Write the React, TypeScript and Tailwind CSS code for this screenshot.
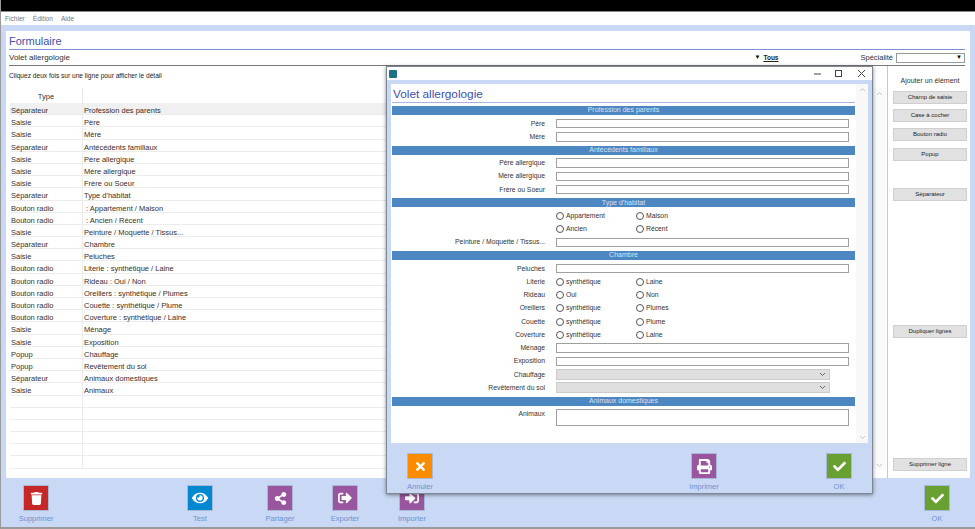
import type { ReactNode } from "react";
import { FaTrash, FaEye, FaShareAlt, FaSignOutAlt, FaSignInAlt, FaPrint, FaTimes, FaCheck } from "react-icons/fa";

const rows = [
  ["Séparateur", "Profession des parents"],
  ["Saisie", "Père"],
  ["Saisie", "Mère"],
  ["Séparateur", "Antécédents familiaux"],
  ["Saisie", "Père allergique"],
  ["Saisie", "Mère allergique"],
  ["Saisie", "Frère ou Soeur"],
  ["Séparateur", "Type d'habitat"],
  ["Bouton radio", "\u00a0: Appartement / Maison"],
  ["Bouton radio", "\u00a0: Ancien / Récent"],
  ["Saisie", "Peinture / Moquette / Tissus..."],
  ["Séparateur", "Chambre"],
  ["Saisie", "Peluches"],
  ["Bouton radio", "Literie : synthétique / Laine"],
  ["Bouton radio", "Rideau : Oui / Non"],
  ["Bouton radio", "Oreillers : synthétique / Plumes"],
  ["Bouton radio", "Couette : synthétique / Plume"],
  ["Bouton radio", "Coverture : synthétique / Laine"],
  ["Saisie", "Ménage"],
  ["Saisie", "Exposition"],
  ["Popup", "Chauffage"],
  ["Popup", "Revêtement du sol"],
  ["Séparateur", "Animaux domestiques"],
  ["Saisie", "Animaux"],
  ["", ""],
  ["", ""],
  ["", ""],
  ["", ""],
  ["", ""],
  ["", ""],
];

function ActionButton({ color, icon, label, className }: { color: string; icon: ReactNode; label: string; className: string }) {
  return (
    <div className={`flex flex-col items-center ${className}`}>
      <div className={`w-[26px] h-[26px] flex items-center justify-center text-white border border-[#aab8d8] ${color}`}>{icon}</div>
      <span className="mt-[3px] text-[7.5px] leading-[10px] text-[#6d92cf] whitespace-nowrap">{label}</span>
    </div>
  );
}

function SideButton({ label, className = "" }: { label: string; className?: string }) {
  return (
    <div className={`h-[13px] w-[74px] flex items-center justify-center bg-[#e1e1e1] border border-[#cfcfcf] text-[6px] text-[#222] ${className}`}>
      {label}
    </div>
  );
}

function Bar({ label }: { label: string }) {
  return <div className="h-[9px] w-[463px] ml-[1px] bg-[#4d87c2] flex items-center justify-center text-[7px] text-[#d4e2f4]">{label}</div>;
}

function Row({ label, children }: { label?: string; children: ReactNode }) {
  return (
    <div className="h-[13.25px] flex items-center">
      <div className="w-[154px] shrink-0 text-right text-[6.8px] text-[#333] whitespace-nowrap">{label}</div>
      <div className="ml-[11px] flex items-center">{children}</div>
    </div>
  );
}

function Field() {
  return <div className="w-[293px] h-[9.5px] bg-white border border-[#a0a0a0]" />;
}

function Radios({ a, b }: { a: string; b: string }) {
  return (
    <>
      <div className="w-[80px] flex items-center gap-[2px]">
        <span className="w-[8px] h-[8px] rounded-full border border-[#555] bg-white" />
        <span className="text-[6.8px] text-[#333]">{a}</span>
      </div>
      <div className="flex items-center gap-[2px]">
        <span className="w-[8px] h-[8px] rounded-full border border-[#555] bg-white" />
        <span className="text-[6.8px] text-[#333]">{b}</span>
      </div>
    </>
  );
}

function Popup() {
  return (
    <div className="w-[274px] h-[11px] bg-[#dfdfdf] border border-[#cccccc] flex items-center justify-end pr-[3px]">
      <svg width="7" height="5" viewBox="0 0 7 5" fill="none" stroke="#666" strokeWidth="1"><path d="M1 1l2.5 2.5L6 1" /></svg>
    </div>
  );
}

function Chevron({ up, className = "" }: { up?: boolean; className?: string }) {
  return (
    <svg width="7" height="5" viewBox="0 0 7 5" fill="none" stroke="#c4c4c4" strokeWidth="1" className={className}>
      <path d={up ? "M1 4l2.5-2.5L6 4" : "M1 1l2.5 2.5L6 1"} />
    </svg>
  );
}

function Modal() {
  return (
    <div className="absolute left-[385px] top-[66px] w-[487px] h-[428px] bg-[#c9d8f4] border border-[#7d8794] shadow-[0_1px_4px_rgba(0,0,0,0.45)] flex flex-col">
      <div className="h-[13px] bg-white flex items-center pl-[2px]">
        <div className="w-[8px] h-[8px] bg-[#1f6f85] rounded-[1px]" />
        <svg width="7" height="2" viewBox="0 0 7 2" className="ml-[417px]"><path d="M0 1h7" stroke="#444" /></svg>
        <svg width="7" height="7" viewBox="0 0 7 7" className="ml-[14px]"><rect x="0.5" y="0.5" width="6" height="6" fill="none" stroke="#444" /></svg>
        <svg width="7" height="7" viewBox="0 0 7 7" className="ml-[16px]"><path d="M0 0l7 7M7 0L0 7" stroke="#444" /></svg>
      </div>
      <div className="mx-[4px] mt-[4px] h-[359px] bg-white flex">
        <div className="w-[465px] pt-[3px]">
          <div className="ml-[2px] text-[11.8px] leading-[15px] text-[#3c4fae]">Volet allergologie</div>
          <div className="ml-[1px] w-[463px] h-[1px] bg-[#a9b4e6]" />
          <div className="h-[3px]" />
          <Bar label="Profession des parents" />
          <div className="py-[2px]">
            <Row label="Père"><Field /></Row>
            <Row label="Mère"><Field /></Row>
          </div>
          <Bar label="Antécédents familiaux" />
          <div className="py-[2px]">
            <Row label="Père allergique"><Field /></Row>
            <Row label="Mère allergique"><Field /></Row>
            <Row label="Frère ou Soeur"><Field /></Row>
          </div>
          <Bar label="Type d'habitat" />
          <div className="py-[2px]">
            <Row><Radios a="Appartement" b="Maison" /></Row>
            <Row><Radios a="Ancien" b="Récent" /></Row>
            <Row label="Peinture / Moquette / Tissus..."><Field /></Row>
          </div>
          <Bar label="Chambre" />
          <div className="py-[2px]">
            <Row label="Peluches"><Field /></Row>
            <Row label="Literie"><Radios a="synthétique" b="Laine" /></Row>
            <Row label="Rideau"><Radios a="Oui" b="Non" /></Row>
            <Row label="Oreillers"><Radios a="synthétique" b="Plumes" /></Row>
            <Row label="Couette"><Radios a="synthétique" b="Plume" /></Row>
            <Row label="Coverture"><Radios a="synthétique" b="Laine" /></Row>
            <Row label="Ménage"><Field /></Row>
            <Row label="Exposition"><Field /></Row>
            <Row label="Chauffage"><Popup /></Row>
            <Row label="Revêtement du sol"><Popup /></Row>
          </div>
          <Bar label="Animaux domestiques" />
          <div className="flex mt-[3px]">
            <div className="w-[154px] text-right text-[6.8px] leading-[10px] text-[#333]">Animaux</div>
            <div className="ml-[11px] w-[293px] h-[17px] bg-white border border-[#a0a0a0]" />
          </div>
        </div>
        <div className="flex-1 bg-[#f8f8f8] flex flex-col items-center justify-between py-[3px]">
          <Chevron up />
          <Chevron />
        </div>
      </div>
      <div className="flex mt-[10px] pl-[20px]">
        <ActionButton color="bg-[#fb8c00]" icon={<FaTimes size={13} />} label="Annuler" className="w-[26px]" />
        <ActionButton color="bg-[#99569e]" icon={<FaPrint size={15} />} label="Imprimer" className="w-[26px] ml-[258px]" />
        <ActionButton color="bg-[#69a032]" icon={<FaCheck size={13} />} label="OK" className="w-[26px] ml-[109px]" />
      </div>
    </div>
  );
}

export default function App() {
  return (
    <div className="relative w-[975px] h-[529px] overflow-hidden flex flex-col bg-[#c9d8f4] border-l border-[#9a9a9a] font-['Liberation_Sans',sans-serif]">
      <div className="h-[11px] bg-black shrink-0" />
      <div className="h-[14px] shrink-0 bg-white border-t border-[#8a8a8a] flex items-center pl-[4px] gap-[8px] text-[6.6px] text-[#777]">
        <span>Fichier</span>
        <span>Édition</span>
        <span>Aide</span>
      </div>
      <div className="ml-[5px] mr-[5px] mt-[6px] h-[447px] shrink-0 bg-white pl-[3px] pr-[5px] flex flex-col">
        <div className="h-[19px] pt-[3px] text-[11px] leading-[15px] text-[#3c4fae] border-b border-[#7f8fd6]">Formulaire</div>
        <div className="h-[16px] flex items-center text-[8px] text-[#333] border-b border-[#777] whitespace-nowrap">
          <span>Volet allergologie</span>
          <span className="ml-auto text-[6px] text-black">▼</span>
          <span className="ml-[3px] text-[6.5px] font-bold underline text-[#222]">Tous</span>
          <span className="ml-[82px] text-[7.5px]">Spécialité</span>
          <div className="ml-[3px] w-[69px] h-[10px] border border-[#999] flex items-center justify-end pr-[2px] text-[6px] text-black">▼</div>
        </div>
        <div className="flex flex-1 min-h-0">
          <div className="flex-1 min-w-0 flex flex-col">
            <div className="h-[22px] pt-[5px] text-[6.6px] leading-[10px] text-[#222]">Cliquez deux fois sur une ligne pour afficher le détail</div>
            <div className="flex">
              <div className="flex-1 pl-[1px] min-w-0">
                <div className="h-[15px] flex text-[7.5px] text-[#333]">
                  <div className="w-[73px] text-center leading-[17px] border-r border-[#e6e6e6]">Type</div>
                </div>
                {rows.map((r, i) => (
                  <div key={i} className={`h-[12.2px] flex text-[7.5px] leading-[15px] text-[#333] border-b border-[#ececec] ${i === 0 ? "bg-[#f0f0f0]" : ""}`}>
                    <div className="w-[73px] pl-[1px] border-r border-[#ececec] whitespace-nowrap">{r[0]}</div>
                    <div className="pl-[1px] whitespace-pre text-[#3a2e2a]">{r[1]}</div>
                  </div>
                ))}
              </div>
              <div className="w-[13px] flex flex-col items-center justify-between pt-[3px] pb-[1px] bg-[#fafafa]">
                <Chevron up />
                <Chevron />
              </div>
            </div>
          </div>
          <div className="w-[80px] ml-[1px] mr-[-2px] shrink-0 border-l border-[#b8c9ee] pl-[5px] flex flex-col">
            <div className="mt-[10px] h-[10px] w-[74px] text-center text-[7px] leading-[10px] text-[#333] whitespace-nowrap">Ajouter un élément</div>
            <SideButton label="Champ de saisie" className="mt-[5px]" />
            <SideButton label="Case à cocher" className="mt-[5px]" />
            <SideButton label="Bouton radio" className="mt-[6px]" />
            <SideButton label="Popup" className="mt-[7px]" />
            <SideButton label="Séparateur" className="mt-[27px]" />
            <SideButton label="Dupliquer lignes" className="mt-[124px]" />
            <SideButton label="Supprimer ligne" className="mt-[120px]" />
          </div>
        </div>
      </div>
      <div className="flex mt-[7px] pl-[22px]">
        <ActionButton color="bg-[#c62828]" icon={<FaTrash size={13} />} label="Supprimer" className="w-[26px]" />
        <ActionButton color="bg-[#0288d1]" icon={<FaEye size={16} />} label="Test" className="w-[26px] ml-[138px]" />
        <ActionButton color="bg-[#99569e]" icon={<FaShareAlt size={13} />} label="Partager" className="w-[26px] ml-[54px]" />
        <ActionButton color="bg-[#99569e]" icon={<FaSignOutAlt size={14} />} label="Exporter" className="w-[26px] ml-[39px]" />
        <ActionButton color="bg-[#99569e]" icon={<FaSignInAlt size={14} />} label="Importer" className="w-[26px] ml-[41px]" />
        <ActionButton color="bg-[#69a032]" icon={<FaCheck size={13} />} label="OK" className="w-[26px] ml-[499px]" />
      </div>
      <div className="absolute left-0 right-0 bottom-0 h-[2px] bg-[#9a9a9a]" />
      <Modal />
    </div>
  );
}
